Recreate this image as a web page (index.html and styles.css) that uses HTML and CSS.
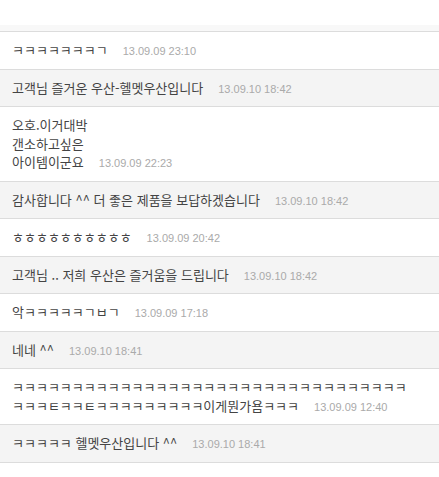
FILE: index.html
```html
<!DOCTYPE html>
<html lang="ko">
<head>
<meta charset="utf-8">
<link rel="stylesheet" href="styles.css">
</head>
<body>
<div class="list">
  <div class="top"><div class="top-band"></div></div>
  <div class="row"><span class="txt">ㅋㅋㅋㅋㅋㅋㅋㄱ</span><span class="date">13.09.09 23:10</span></div>
  <div class="row alt"><span class="txt">고객님 즐거운 우산-헬멧우산입니다</span><span class="date">13.09.10 18:42</span></div>
  <div class="row"><span class="txt">오호.이거대박<br>갠소하고싶은<br>아이템이군요</span><span class="date">13.09.09 22:23</span></div>
  <div class="row alt"><span class="txt">감사합니다 ^^ 더 좋은 제품을 보답하겠습니다</span><span class="date">13.09.10 18:42</span></div>
  <div class="row"><span class="txt">ㅎㅎㅎㅎㅎㅎㅎㅎㅎㅎ</span><span class="date">13.09.09 20:42</span></div>
  <div class="row alt"><span class="txt">고객님 .. 저희 우산은 즐거움을 드립니다</span><span class="date">13.09.10 18:42</span></div>
  <div class="row"><span class="txt">악ㅋㅋㅋㅋㅋㄱㅂㄱ</span><span class="date">13.09.09 17:18</span></div>
  <div class="row alt"><span class="txt">네네 ^^</span><span class="date">13.09.10 18:41</span></div>
  <div class="row"><span class="txt">ㅋㅋㅋㅋㅋㅋㅋㅋㅋㅋㅋㅋㅋㅋㅋㅋㅋㅋㅋㅋㅋㅋㅋㅋㅋㅋㅋㅋㅋㅋㅋㅋㅋ<br>ㅋㅋㅋㅌㅋㅋㅌㅋㅋㅋㅋㅋㅋㅋㅋㅋ이게뭔가욤ㅋㅋㅋ</span><span class="date">13.09.09 12:40</span></div>
  <div class="row alt"><span class="txt">ㅋㅋㅋㅋㅋ 헬멧우산입니다 ^^</span><span class="date">13.09.10 18:41</span></div>
</div>
</body>
</html>
```
FILE: styles.css
```css
html, body {
  margin: 0;
  padding: 0;
  background: #ffffff;
}
.list {
  width: 439px;
  font-family: "Noto Sans CJK KR", "Liberation Sans", sans-serif;
  font-size: 13px;
  color: #444444;
}
.top {
  height: 31px;
  display: flex;
  flex-direction: column;
  justify-content: flex-end;
  border-bottom: 1px solid #dcdcdc;
}
.top-band {
  height: 6px;
  background: #f8f8f8;
}
.row {
  padding: 9px 12px 9px 12px;
  line-height: 18.5px;
  border-bottom: 1px solid #dcdcdc;
  background: #ffffff;
}
.row.alt {
  background: #f4f4f4;
}
.date {
  font-family: "Liberation Sans", Arial, sans-serif;
  font-size: 11px;
  line-height: 1;
  color: #aaaaaa;
  margin-left: 15px;
}
```
